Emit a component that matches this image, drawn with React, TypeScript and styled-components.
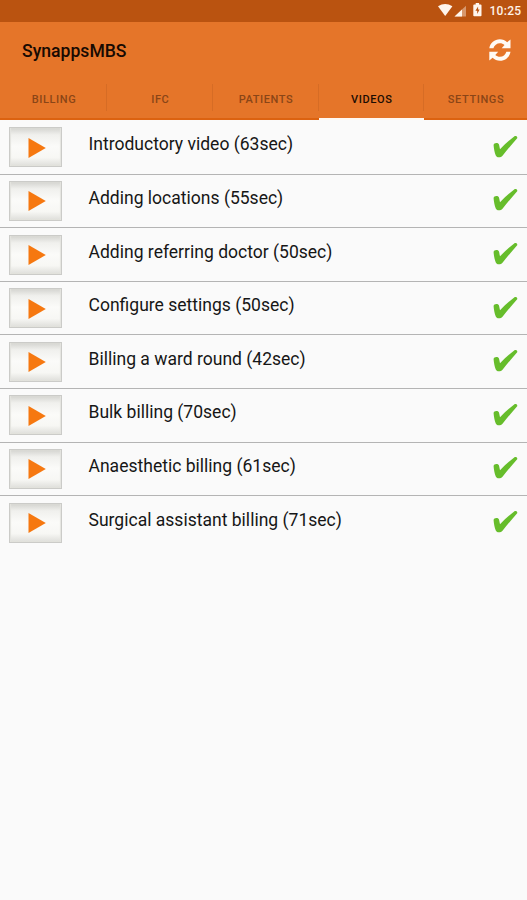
import React from "react";
import styled, { createGlobalStyle } from "styled-components";

const GlobalStyle = createGlobalStyle`
  * { box-sizing: border-box; }
  body { margin: 0; background: #fafafa; font-family: Roboto, "Liberation Sans", sans-serif; }
`;

const Screen = styled.div`
  display: flex;
  flex-direction: column;
  width: 100%;
  min-height: 100vh;
  background: #fafafa;
`;

const StatusBar = styled.div`
  display: flex;
  justify-content: flex-end;
  height: 21.5px;
  padding-right: 5px;
  background: #ba5310;
`;

const Clock = styled.span`
  width: 32.5px;
  margin-left: 6px;
  color: #fff2e8;
  font-size: 12px;
  font-weight: 500;
  line-height: 23px;
  letter-spacing: 0.3px;
`;

const Header = styled.header`
  height: 98.5px;
  background: #e57529;
  display: flex;
  flex-direction: column;
`;

const Toolbar = styled.div`
  display: flex;
  justify-content: space-between;
  height: 62.5px;
  padding: 0 16px 0 22px;
`;

const Title = styled.h1`
  margin: 0;
  font-size: 17.6px;
  font-weight: 500;
  line-height: 58px;
  color: #170a02;
`;

const SyncButton = styled.button`
  display: flex;
  padding: 17.5px 0 0;
  border: 0;
  background: none;
  align-self: flex-start;
`;

const Tabs = styled.nav`
  display: grid;
  grid-template-columns: 107px 105.5px 106px 105.5px 1fr;
  height: 36px;
`;

const Tab = styled.div<{ $active?: boolean }>`
  text-align: center;
  font-size: 11px;
  font-weight: 500;
  line-height: 32px;
  letter-spacing: 0.6px;
  padding-left: 1px;
  color: ${(p) => (p.$active ? "#1c0d03" : "#8a4517")};
  border-bottom: 2px solid ${(p) => (p.$active ? "#fff8f2" : "#dc6210")};
  background: linear-gradient(#d66c25, #d66c25) right 0 top 0 / 1px 27px no-repeat;
  &:last-child { background: none; }
`;

const List = styled.ul`
  list-style: none;
  margin: 0;
  padding: 0;
`;

const Row = styled.li`
  display: flex;
  align-items: flex-start;
  height: 53.6px;
  padding: 7.4px 9px 0 9px;
  box-shadow: 0 1px 0 #b4b4b4;
  &:last-child { box-shadow: none; }
`;

const PlayButton = styled.button`
  display: flex;
  align-items: center;
  justify-content: center;
  width: 53px;
  height: 40px;
  padding: 1px 0 0 2px;
  border: 1px solid #cbcbc8;
  background: linear-gradient(#d4d4d0 0, #f0f0ed 18%, #fbfbf9 48%, #f7f7f4 78%, #dededa 100%);
  box-shadow: inset 1px 0 1px #e4e4df, inset -1px 0 1px #e4e4df;
`;

const VideoName = styled.span`
  flex: 1;
  margin-left: 26.5px;
  font-size: 17.55px;
  line-height: 34px;
  color: #161616;
  white-space: nowrap;
`;

const CheckIcon = styled.svg`
  margin-top: 7.5px;
  flex: none;
`;

const StatusIcons = () => (
  <svg width="46" height="21" viewBox="0 0 46 21" fill="#fff5ec">
    <path d="M0 6.2Q7.200 1.800 14.400 6.200L7.200 16Z" />
    <path d="M16.500 16.500L28 5.700V16.500Z" opacity="0.42" />
    <path d="M16.500 16.500L24 9.500V16.500Z" />
    <path d="M35.300 5.200Q35.300 4.400 36.200 4.400H37.700V3H41.100V4.400H42.600Q43.500 4.400 43.500 5.200V15.500Q43.500 16.300 42.600 16.300H36.200Q35.300 16.300 35.300 15.500Z" />
    <path d="M40.100 6.500L37.400 10.700H39.200V14L41.600 9.500H40.100Z" fill="#ba5310" />
  </svg>
);

const SyncIcon = () => (
  <svg width="22" height="22" viewBox="0 0 22 22" fill="#fffaf4">
    <path d="M0.300 9.300C1.200 4 5.600 0.300 10.800 0.300C13.700 0.300 16.200 1.300 18.200 3.200L21.500 0.400V9.300H12.700L15.500 6C14.200 4.800 12.700 4.200 10.900 4.200C7.800 4.200 5.300 6.300 4.400 9.300Z" />
    <path d="M21.500 12.700C20.600 18 16.300 21.700 11 21.700C8.200 21.700 5.600 20.700 3.600 18.800L0.300 21.600V12.700H9.200L6.300 16C7.600 17.200 9.200 17.800 10.900 17.800C14 17.800 16.500 15.700 17.400 12.700Z" />
  </svg>
);

const videos = [
  "Introductory video (63sec)",
  "Adding locations (55sec)",
  "Adding referring doctor (50sec)",
  "Configure settings (50sec)",
  "Billing a ward round (42sec)",
  "Bulk billing (70sec)",
  "Anaesthetic billing (61sec)",
  "Surgical assistant billing (71sec)",
];

const tabs = ["BILLING", "IFC", "PATIENTS", "VIDEOS", "SETTINGS"];

export default function App() {
  return (
    <Screen>
      <GlobalStyle />
      <StatusBar>
        <StatusIcons />
        <Clock>10:25</Clock>
      </StatusBar>
      <Header>
        <Toolbar>
          <Title>SynappsMBS</Title>
          <SyncButton aria-label="Sync">
            <SyncIcon />
          </SyncButton>
        </Toolbar>
        <Tabs>
          {tabs.map((name) => (
            <Tab key={name} $active={name === "VIDEOS"}>{name}</Tab>
          ))}
        </Tabs>
      </Header>
      <List>
        {videos.map((name) => (
          <Row key={name}>
            <PlayButton aria-label="Play">
              <svg width="18" height="20" viewBox="0 0 18 20">
                <path d="M0.500 0L17.800 10L0.500 20Z" fill="#f67810" />
              </svg>
            </PlayButton>
            <VideoName>{name}</VideoName>
            <CheckIcon width="25" height="25" viewBox="0 0 25 25">
              <path
                d="M0.600 10.200C0.500 8.200 3.500 7.500 5.200 8.500C6.400 9.300 6.300 11.500 7 14.300C11.500 9.500 16.500 4.800 21.200 1.400C22.800 0.500 24.800 1.600 24.200 3.200C19.500 8.300 14.500 14.500 9.500 20.700C7.700 22.800 4 23 2.800 20.500C1.600 17.500 0.800 13.500 0.600 10.200Z"
                fill="#66bd2b"
              />
            </CheckIcon>
          </Row>
        ))}
      </List>
    </Screen>
  );
}
